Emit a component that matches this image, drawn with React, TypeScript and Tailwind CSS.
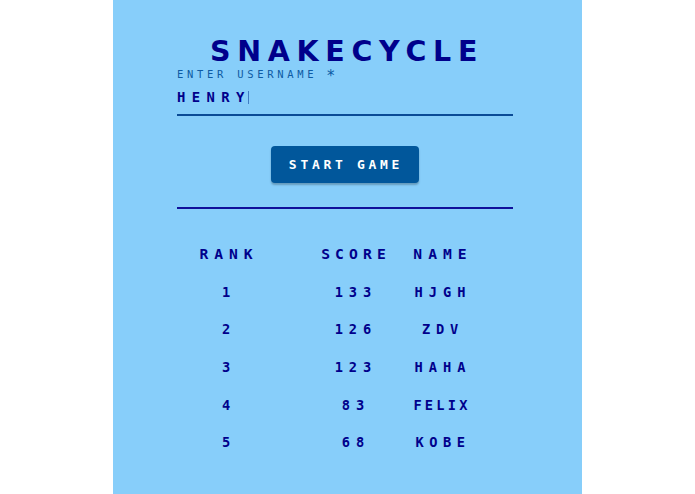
import { useState } from 'react'
import { clsx } from 'clsx'

const columns = [
  { label: 'RANK', tracking: 'tracking-[5.9px]' },
  { label: 'SCORE', tracking: 'tracking-[5.1px]' },
  { label: 'NAME', tracking: 'tracking-[6px]' },
]

const scores = [
  { score: 133, name: 'HJGH', tracking: 'tracking-[6px]' },
  { score: 126, name: 'ZDV', tracking: 'tracking-[5.8px]' },
  { score: 123, name: 'HAHA', tracking: 'tracking-[6px]' },
  { score: 83, name: 'FELIX', tracking: 'tracking-[3.2px] -ml-[2px]' },
  { score: 68, name: 'KOBE', tracking: 'tracking-[5.5px]' },
]

const rowClass = 'ml-3 grid h-[37.67px] grid-cols-[123px_88px_86px] items-center text-center'

function Leaderboard() {
  return (
    <div className="mt-[26.5px] text-[13.7px]">
      <div className={clsx(rowClass, 'text-[14.7px]')}>
        {columns.map((col, i) => (
          <span key={col.label} className={clsx(col.tracking, i === 0 && 'w-20')}>{col.label}</span>
        ))}
      </div>
      {scores.map((row, i) => (
        <div key={row.name} className={rowClass}>
          <span className="w-20 tracking-[6px]">{i + 1}</span>
          <span className="tracking-[6px]">{row.score}</span>
          <span className={row.tracking}>{row.name}</span>
        </div>
      ))}
    </div>
  )
}

export default function App() {
  const [username] = useState('HENRY')

  return (
    <div className="h-screen overflow-hidden bg-white pl-[113px] font-['DejaVu_Sans_Mono',monospace] font-bold text-[#00008b]">
      <main className="h-full w-[469px] bg-[#87cefa] px-16">
        <div className="w-[336px] pt-[34px]">
          <h1 className="pt-[2px] pl-[33px] font-['DejaVu_Sans',sans-serif] text-[28.5px] leading-[31px] tracking-[6.7px] whitespace-nowrap">SNAKECYCLE</h1>

          {/* Username field */}
          <label className="flex h-[14px] items-center text-[10.5px] leading-none font-normal tracking-[3.7px] whitespace-pre text-[#0d5ba4]">
            ENTER USERNAME
            <span className="ml-[9px] h-[10px] text-[15px] leading-[14px]">*</span>
          </label>
          <div className="flex h-[35px] items-center border-b-2 border-[#0a4b96] text-[13.9px] tracking-[6.4px]">
            <span>{username}</span>
            <span className="-ml-[3px] h-[13px] w-px bg-[#3f7dc4]" />
          </div>

          <div className="flex justify-center pt-[30px]">
            <button className="mr-[-18px] -ml-[18px] h-[37px] w-[148px] rounded bg-[#01579b] pl-[2px] text-[13px] tracking-[3.7px] whitespace-nowrap text-white shadow-[0_2px_2px_rgba(0,0,0,0.25)] [word-spacing:-1px]">
              START GAME
            </button>
          </div>

          <hr className="mt-6 border-t-2 border-[#10109a]" />

          <Leaderboard />
        </div>
      </main>
    </div>
  )
}
